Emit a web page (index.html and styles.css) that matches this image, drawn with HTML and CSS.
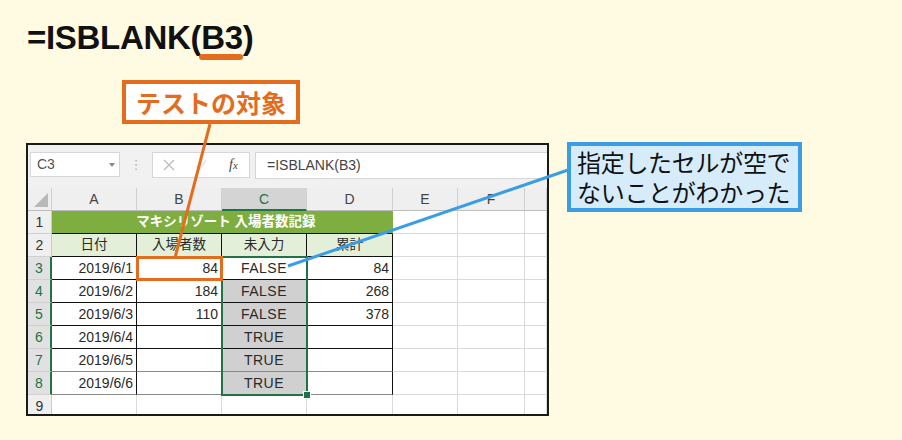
FILE: index.html
```html
<!DOCTYPE html>
<html lang="ja">
<head>
  <meta charset="UTF-8">
  <title>ISBLANK</title>
  <link rel="stylesheet" href="styles.css">
</head>
<body>
  <h1 class="formula">=ISBLANK(<span class="ref">B3</span>)</h1>
  <div class="label-target">テストの対象</div>

  <div class="sheet">
    <div class="toolbar">
      <div class="namebox">C3<span class="caret"></span></div>
      <div class="grip">⋮</div>
      <div class="fx-buttons">
        <svg class="btn-icon" width="12" height="12" viewBox="0 0 12 12"><path d="M1 1L11 11M11 1L1 11" stroke="#bdbdbd" stroke-width="1.4" fill="none"/></svg>
        <svg class="btn-icon" width="12" height="12" viewBox="0 0 12 12"><path d="M1 7L4.5 10.5L11 1" stroke="#e2e2e2" stroke-width="1.4" fill="none"/></svg>
        <span class="fx">f<span class="fx-x">x</span></span>
      </div>
      <div class="formula-input">=ISBLANK(B3)</div>
    </div>

    <div class="grid-wrap">
      <div class="grid">
        <div class="corner"></div>
        <div class="col-h">A</div>
        <div class="col-h">B</div>
        <div class="col-h active">C</div>
        <div class="col-h">D</div>
        <div class="col-h">E</div>
        <div class="col-h">F</div>
        <div class="col-h"></div>

        <div class="row-h">1</div>
        <div class="cell title">マキシリゾート 入場者数記録</div>
        <div class="cell"></div><div class="cell"></div><div class="cell"></div>

        <div class="row-h">2</div>
        <div class="cell t head">日付</div>
        <div class="cell t head">入場者数</div>
        <div class="cell t head">未入力</div>
        <div class="cell t head">累計</div>
        <div class="cell"></div><div class="cell"></div><div class="cell"></div>

        <div class="row-h sel">3</div>
        <div class="cell t num">2019/6/1</div>
        <div class="cell t num">84</div>
        <div class="cell t mid">FALSE</div>
        <div class="cell t num">84</div>
        <div class="cell"></div><div class="cell"></div><div class="cell"></div>

        <div class="row-h sel">4</div>
        <div class="cell t num">2019/6/2</div>
        <div class="cell t num">184</div>
        <div class="cell t mid shade">FALSE</div>
        <div class="cell t num">268</div>
        <div class="cell"></div><div class="cell"></div><div class="cell"></div>

        <div class="row-h sel">5</div>
        <div class="cell t num">2019/6/3</div>
        <div class="cell t num">110</div>
        <div class="cell t mid shade">FALSE</div>
        <div class="cell t num">378</div>
        <div class="cell"></div><div class="cell"></div><div class="cell"></div>

        <div class="row-h sel">6</div>
        <div class="cell t num">2019/6/4</div>
        <div class="cell t num"></div>
        <div class="cell t mid shade">TRUE</div>
        <div class="cell t num"></div>
        <div class="cell"></div><div class="cell"></div><div class="cell"></div>

        <div class="row-h sel">7</div>
        <div class="cell t num soft">2019/6/5</div>
        <div class="cell t num soft"></div>
        <div class="cell t mid shade soft">TRUE</div>
        <div class="cell t num soft"></div>
        <div class="cell"></div><div class="cell"></div><div class="cell"></div>

        <div class="row-h sel">8</div>
        <div class="cell t num soft">2019/6/6</div>
        <div class="cell t num soft"></div>
        <div class="cell t mid shade soft">TRUE</div>
        <div class="cell t num soft"></div>
        <div class="cell"></div><div class="cell"></div><div class="cell"></div>

        <div class="row-h">9</div>
        <div class="cell"></div><div class="cell"></div><div class="cell"></div><div class="cell"></div>
        <div class="cell"></div><div class="cell"></div><div class="cell"></div>
      </div>
      <div class="selection"><span class="handle"></span></div>
      <div class="target-cell"></div>
    </div>
  </div>

  <svg class="leaders" width="902" height="440" viewBox="0 0 902 440">
    <line x1="210" y1="124" x2="175" y2="258" stroke="#e36c1d" stroke-width="3"/>
    <line x1="568" y1="170" x2="288" y2="266" stroke="#3b9de3" stroke-width="3"/>
  </svg>

  <div class="note">指定したセルが空で<br>ないことがわかった</div>
</body>
</html>
```

FILE: styles.css
```css
body {
  margin: 0;
  height: 440px;
  overflow: hidden;
  position: relative;
  background-color: #fefbe2;
  font-family: "Liberation Sans", "Noto Sans CJK JP", sans-serif;
  color: #222;
}

/* heading */
.formula {
  margin: 0;
  padding: 18px 0 0 27px;
  font-size: 33px;
  line-height: 40px;
  letter-spacing: -0.3px;
  font-weight: bold;
  color: #111;
}
.ref {
  position: relative;
}
.ref::after {
  content: "";
  position: absolute;
  left: -2px;
  right: 0;
  bottom: -4px;
  height: 6px;
  border-radius: 3px;
  background-color: #e36c1d;
}

.label-target {
  margin: 22px 0 0 122px;
  width: 178px;
  height: 44px;
  box-sizing: border-box;
  border: 4px solid #e36c1d;
  background-color: #fff;
  color: #e36c1d;
  font-family: "Noto Sans CJK JP", sans-serif;
  font-weight: bold;
  font-size: 25px;
  display: flex;
  align-items: center;
  justify-content: center;
}

/* spreadsheet */
.sheet {
  margin: 19px 0 0 26px;
  width: 523px;
  height: 273px;
  box-sizing: border-box;
  border: 2px solid #1a1a1a;
  background-color: #fff;
  overflow: hidden;
}
.toolbar {
  height: 43px;
  box-sizing: border-box;
  padding-top: 7px;
  background-color: #f1f1f1;
  display: flex;
  align-items: flex-start;
}
.namebox {
  margin-left: 2px;
  width: 90px;
  height: 25px;
  box-sizing: border-box;
  border: 1px solid #d6d6d6;
  background-color: #fff;
  color: #555;
  font-size: 14px;
  line-height: 23px;
  padding-left: 6px;
  position: relative;
}
.caret {
  position: absolute;
  right: 4px;
  top: 10px;
  border-left: 3px solid transparent;
  border-right: 3px solid transparent;
  border-top: 4px solid #888;
}
.grip {
  width: 32px;
  text-align: center;
  color: #b5b5b5;
  font-family: "DejaVu Sans", sans-serif;
  font-size: 13px;
  line-height: 25px;
}
.fx-buttons {
  width: 98px;
  height: 26px;
  box-sizing: border-box;
  border: 1px solid #d6d6d6;
  background-color: #fff;
  display: flex;
  align-items: center;
  gap: 20px;
  padding-left: 10px;
}
.fx {
  font-family: "Liberation Serif", serif;
  font-style: italic;
  font-size: 14px;
  color: #444;
  margin-left: 2px;
}
.fx-x {
  font-size: 11px;
}
.formula-input {
  flex: 1;
  margin-left: 5px;
  height: 27px;
  box-sizing: border-box;
  border: 1px solid #d6d6d6;
  border-right: none;
  background-color: #fff;
  color: #444;
  font-size: 14px;
  line-height: 25px;
  padding-left: 11px;
}

.grid-wrap {
  position: relative;
}
.grid {
  display: grid;
  grid-template-columns: 24px 85px 85px 85px 86px 65px 67px 1fr;
  grid-auto-rows: 23px;
}
.grid > div {
  box-sizing: border-box;
}
.corner {
  background-color: #efefef;
  border-right: 1px solid #d0d0d0;
  border-bottom: 1px solid #bdbdbd;
  position: relative;
}
.corner::after {
  content: "";
  position: absolute;
  right: 3px;
  bottom: 3px;
  width: 14px;
  height: 14px;
  background-color: #b9b9b9;
  clip-path: polygon(100% 0, 100% 100%, 0 100%);
}
.col-h {
  background-color: #efefef;
  border-right: 1px solid #d0d0d0;
  border-bottom: 1px solid #bdbdbd;
  color: #444;
  font-size: 14px;
  line-height: 22px;
  text-align: center;
}
.col-h.active {
  background-color: #d4d4d4;
  color: #217346;
  border-bottom: 2px solid #217346;
}
.row-h {
  background-color: #efefef;
  border-right: 1px solid #c9c9c9;
  border-bottom: 1px solid #d0d0d0;
  color: #333;
  font-size: 14px;
  line-height: 22px;
  text-align: center;
}
.row-h.sel {
  background-color: #e1e1e1;
  color: #217346;
  border-right: 2px solid #217346;
}
.cell {
  border-right: 1px solid #dadada;
  border-bottom: 1px solid #dadada;
  font-size: 14px;
  line-height: 22px;
  color: #2a2a2a;
  white-space: nowrap;
}
.cell.t {
  border-right-color: #111;
  border-bottom-color: #111;
}
.cell.soft {
  border-bottom-color: #8a8a8a;
}
.cell.title {
  grid-column: span 4;
  background-color: #7eae3f;
  border-right-color: #7eae3f;
  border-bottom-color: #111;
  color: #fff;
  font-weight: bold;
  font-size: 13.5px;
  text-align: center;
  padding-left: 8px;
}
.cell.head {
  background-color: #e3efd9;
  text-align: center;
  font-size: 13.5px;
}
.cell.num {
  text-align: right;
  padding-right: 3px;
}
.cell.mid {
  text-align: center;
  letter-spacing: 0.5px;
}
.cell.shade {
  background-color: #d0d0d0;
}

.selection {
  position: absolute;
  left: 193px;
  top: 68px;
  width: 87px;
  height: 140px;
  box-sizing: border-box;
  border: 2px solid #217346;
}
.handle {
  position: absolute;
  right: -5px;
  bottom: -5px;
  width: 6px;
  height: 6px;
  background-color: #217346;
  border: 1px solid #fff;
}
.target-cell {
  position: absolute;
  left: 108px;
  top: 68px;
  width: 87px;
  height: 25px;
  box-sizing: border-box;
  border: 3px solid #e36c1d;
}

/* callouts */
.leaders {
  position: absolute;
  left: 0;
  top: 0;
  pointer-events: none;
}
.note {
  position: absolute;
  left: 567px;
  top: 142px;
  width: 235px;
  height: 70px;
  box-sizing: border-box;
  border: 4px solid #3b9de3;
  background-color: #d6ecfb;
  color: #111;
  font-family: "Noto Sans CJK JP", sans-serif;
  font-size: 24px;
  line-height: 30px;
  padding: 1px 0 0 6px;
  letter-spacing: -0.3px;
}
```
